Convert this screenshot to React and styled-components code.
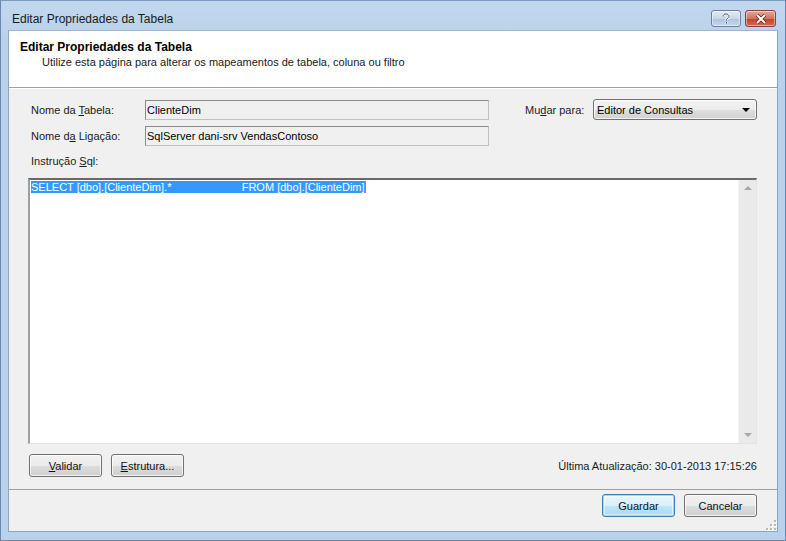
import React from 'react';
import styled, { createGlobalStyle, css } from 'styled-components';

const GlobalStyle = createGlobalStyle`
  html, body {
    margin: 0;
    padding: 0;
    background: #bcd3ec;
  }
  body {
    font-family: "Liberation Sans", Arial, sans-serif;
    font-size: 11px;
    color: #000;
  }
`;

const Window = styled.div`
  width: 786px;
  height: 541px;
  box-sizing: border-box;
  display: flex;
  flex-direction: column;
  background: linear-gradient(#c2d8ef, #b9d1ea 40px);
  border: 1px solid #6b89b0;
  border-top-color: #7d9bc2;
`;

const TitleBar = styled.div`
  height: 29px;
  display: flex;
  align-items: center;
  padding: 0 9px 0 11px;
  flex-shrink: 0;
`;

const Caption = styled.div`
  flex: 1;
  font-size: 12px;
  color: #1a1a1a;
  padding-top: 7px;
`;

const CaptionButton = styled.div`
  height: 17px;
  box-sizing: border-box;
  border: 1px solid #6d7f99;
  border-radius: 3px;
  display: flex;
  align-items: center;
  justify-content: center;
  margin-top: 6px;
  box-shadow: inset 0 0 0 1px rgba(255, 255, 255, 0.45);
  ${({ variant }) =>
    variant === 'close'
      ? css`
          width: 31px;
          margin-left: 4px;
          border-color: #8e3f3a;
          background: linear-gradient(#e3a99f, #d0735f 50%, #c0402d 51%, #d16a55);
        `
      : css`
          width: 30px;
          background: linear-gradient(#e3ecf6, #c8d8ea 50%, #aec4dd 51%, #c5d7ec);
        `}
`;

const Client = styled.div`
  flex: 1;
  margin: 0 7px 8px 7px;
  background: #f0f0f0;
  display: flex;
  flex-direction: column;
  border: 1px solid #8ca4c4;
  border-top-color: #9fb6d4;
`;

const Header = styled.div`
  height: 57px;
  background: #fff;
  border-bottom: 1px solid #a0a0a0;
  box-shadow: 0 1px 0 #fff;
  padding: 9px 0 0 11px;
  box-sizing: border-box;
`;

const HeaderTitle = styled.div`
  font-weight: bold;
  font-size: 12px;
  line-height: 14px;
`;

const HeaderText = styled.div`
  padding-left: 22px;
  margin-top: 1px;
  line-height: 14px;
  color: #1a1a1a;
`;

const Body = styled.div`
  display: flex;
  flex-direction: column;
  padding: 11px 20px 0 19px;
`;

const Row = styled.div`
  display: flex;
  align-items: center;
  margin-top: ${({ top }) => top || 0}px;
`;

const Label = styled.div`
  width: ${({ w }) => w || 114}px;
  padding-left: ${({ pl }) => (pl === undefined ? 3 : pl)}px;
  color: #1b1b1b;
  flex-shrink: 0;
`;

const Key = styled.span`
  text-decoration: underline;
`;

const Field = styled.div`
  width: 344px;
  height: 20px;
  box-sizing: border-box;
  border: 1px solid #c0c0c0;
  border-top-color: #8a8a8a;
  border-left-color: #8a8a8a;
  background: #f0f0f0;
  display: flex;
  align-items: center;
  padding-left: 1px;
`;

const Spacer = styled.div`
  flex: 1;
`;

const Select = styled.div`
  width: 164px;
  height: 21px;
  box-sizing: border-box;
  border: 1px solid #707070;
  border-radius: 3px;
  background: linear-gradient(#f3f3f3, #ececec 50%, #dedede 51%, #d2d2d2);
  box-shadow: inset 0 0 0 1px rgba(255, 255, 255, 0.7);
  display: flex;
  align-items: center;
  padding: 0 6px 0 3px;
`;

const SelectValue = styled.span`
  flex: 1;
`;

const Arrow = styled.div`
  width: 0;
  height: 0;
  border-left: 4px solid transparent;
  border-right: 4px solid transparent;
  border-top: 4px solid #000;
`;

const SqlBox = styled.div`
  height: 266px;
  box-sizing: border-box;
  border: 1px solid #fff;
  border-top: 2px solid #696969;
  border-left: 2px solid #a0a0a0;
  border-right-color: #e3e3e3;
  border-bottom-color: #e3e3e3;
  background: #fff;
  display: flex;
  margin-top: 11px;
`;

const SqlText = styled.div`
  flex: 1;
  padding: 1px 0 0 1px;
  line-height: 13px;
`;

const Selected = styled.span`
  background: #3399ff;
  color: #fff;
  white-space: pre;
  border-right: 1px solid #e57300;
`;

const ScrollBar = styled.div`
  width: 17px;
  background: #eaeaea;
  border-left: 1px solid #f4f4f4;
  display: flex;
  flex-direction: column;
  justify-content: space-between;
  align-items: center;
  padding: 6px 0 6px;
`;

const ScrollArrow = styled.div`
  width: 0;
  height: 0;
  border-left: 4px solid transparent;
  border-right: 4px solid transparent;
  ${({ up }) =>
    up ? 'border-bottom: 4px solid #a8a8a8;' : 'border-top: 4px solid #a8a8a8;'}
`;

const ActionRow = styled.div`
  display: flex;
  align-items: center;
  gap: 9px;
  margin-top: 10px;
  padding-left: 1px;
`;

const Button = styled.div`
  width: 73px;
  height: 23px;
  box-sizing: border-box;
  border: 1px solid #707070;
  border-radius: 3px;
  background: linear-gradient(#f2f2f2, #ebebeb 50%, #dddddd 51%, #cfcfcf);
  box-shadow: inset 0 0 0 1px rgba(255, 255, 255, 0.75);
  display: flex;
  align-items: center;
  justify-content: center;
  color: #111;
  ${({ primary }) =>
    primary &&
    css`
      border-color: #3c7fb1;
      box-shadow: inset 0 0 0 1px #9fd8f6, inset 0 0 0 2px rgba(255, 255, 255, 0.5);
      background: linear-gradient(#eaf6fd, #d9f0fc 50%, #bee6fd 51%, #a7d9f5);
    `}
`;

const Updated = styled.div`
  margin-left: auto;
  color: #1a1a1a;
`;

const Footer = styled.div`
  flex: 1;
  box-sizing: border-box;
  border-top: 1px solid #a0a0a0;
  margin-top: 12px;
  display: flex;
  align-items: flex-start;
  justify-content: flex-end;
  gap: 9px;
  padding: 4px 20px 0 0;
  position: relative;
`;

const Grip = styled.svg`
  position: absolute;
  right: 0;
  bottom: 0;
`;

const gripDots = [
  [9, 1],
  [9, 5],
  [5, 5],
  [9, 9],
  [5, 9],
  [1, 9],
];

const App = () => (
  <>
    <GlobalStyle />
    <Window>
      <TitleBar>
        <Caption>Editar Propriedades da Tabela</Caption>
        <CaptionButton>
          <svg width="10" height="12" viewBox="0 0 10 12">
            <path
              d="M2 3.5 C2 1.5 3.5 1 5 1 C6.8 1 8 2 8 3.5 C8 5 6 5.5 5.5 6.5 L5.5 7.5 M5.5 9 L5.5 10.5"
              fill="none"
              stroke="#fff"
              strokeWidth="2"
            />
            <path
              d="M2 3.5 C2 1.5 3.5 1 5 1 C6.8 1 8 2 8 3.5 C8 5 6 5.5 5.5 6.5 L5.5 7.5 M5.5 9 L5.5 10.5"
              fill="none"
              stroke="#3a4a60"
              strokeWidth="1"
            />
          </svg>
        </CaptionButton>
        <CaptionButton variant="close">
          <svg width="12" height="10" viewBox="0 0 12 10">
            <path d="M2 1 L10 9 M10 1 L2 9" stroke="#5a1a14" strokeWidth="3.4" />
            <path d="M2 1 L10 9 M10 1 L2 9" stroke="#fff" strokeWidth="2" />
          </svg>
        </CaptionButton>
      </TitleBar>
      <Client>
        <Header>
          <HeaderTitle>Editar Propriedades da Tabela</HeaderTitle>
          <HeaderText>
            Utilize esta página para alterar os mapeamentos de tabela, coluna ou filtro
          </HeaderText>
        </Header>
        <Body>
          <Row>
            <Label>
              Nome da <Key>T</Key>abela:
            </Label>
            <Field>ClienteDim</Field>
            <Spacer />
            <Label w={68} pl={0}>
              Mu<Key>d</Key>ar para:
            </Label>
            <Select>
              <SelectValue>Editor de Consultas</SelectValue>
              <Arrow />
            </Select>
          </Row>
          <Row top={6}>
            <Label>
              Nome d<Key>a</Key> Ligação:
            </Label>
            <Field>SqlServer dani-srv VendasContoso</Field>
          </Row>
          <Row top={9}>
            <Label>
              Instrução <Key>S</Key>ql:
            </Label>
          </Row>
          <SqlBox>
            <SqlText>
              <Selected>{'SELECT [dbo].[ClienteDim].*                       FROM [dbo].[ClienteDim]'}</Selected>
            </SqlText>
            <ScrollBar>
              <ScrollArrow up />
              <ScrollArrow />
            </ScrollBar>
          </SqlBox>
          <ActionRow>
            <Button>
              <span>
                <Key>V</Key>alidar
              </span>
            </Button>
            <Button>
              <span>
                <Key>E</Key>strutura...
              </span>
            </Button>
            <Updated>Última Atualização: 30-01-2013 17:15:26</Updated>
          </ActionRow>
        </Body>
        <Footer>
          <Button primary>Guardar</Button>
          <Button>Cancelar</Button>
          <Grip width="12" height="12" viewBox="0 0 12 12">
            {gripDots.map(([x, y]) => (
              <g key={`${x}-${y}`}>
                <rect x={x + 1} y={y + 1} width="2" height="2" fill="#fff" />
                <rect x={x} y={y} width="2" height="2" fill="#b8b8b8" />
              </g>
            ))}
          </Grip>
        </Footer>
      </Client>
    </Window>
  </>
);

export default App;
